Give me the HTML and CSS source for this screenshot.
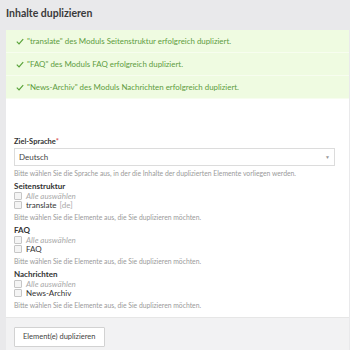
FILE: index.html
```html
<!DOCTYPE html>
<html lang="de">
<head>
    <meta charset="UTF-8">
    <title>Inhalte duplizieren</title>
    <link rel="stylesheet" href="styles.css">
</head>
<body>
    <h1 class="page-title">Inhalte duplizieren</h1>

    <div class="panel">
        <ul class="alerts">
            <li class="alert"><svg class="check" viewBox="0 0 10 8"><path d="M1 4.2 L3.8 7 L9 1" /></svg>"translate" des Moduls Seitenstruktur erfolgreich dupliziert.</li>
            <li class="alert"><svg class="check" viewBox="0 0 10 8"><path d="M1 4.2 L3.8 7 L9 1" /></svg>"FAQ" des Moduls FAQ erfolgreich dupliziert.</li>
            <li class="alert"><svg class="check" viewBox="0 0 10 8"><path d="M1 4.2 L3.8 7 L9 1" /></svg>"News-Archiv" des Moduls Nachrichten erfolgreich dupliziert.</li>
        </ul>

        <form class="panel-body">
            <div class="field">
                <label class="field-label">Ziel-Sprache<span class="req">*</span></label>
                <div class="select">
                    <span>Deutsch</span>
                    <span class="caret">&#9660;</span>
                </div>
                <p class="hint">Bitte wählen Sie die Sprache aus, in der die Inhalte der duplizierten Elemente vorliegen werden.</p>
            </div>

            <div class="field">
                <label class="group-label">Seitenstruktur</label>
                <label class="option all"><span class="box"></span>Alle auswählen</label>
                <label class="option"><span class="box"></span>translate <span class="lang">[de]</span></label>
                <p class="hint">Bitte wählen Sie die Elemente aus, die Sie duplizieren möchten.</p>
            </div>

            <div class="field">
                <label class="group-label">FAQ</label>
                <label class="option all"><span class="box"></span>Alle auswählen</label>
                <label class="option"><span class="box"></span>FAQ</label>
                <p class="hint">Bitte wählen Sie die Elemente aus, die Sie duplizieren möchten.</p>
            </div>

            <div class="field">
                <label class="group-label">Nachrichten</label>
                <label class="option all"><span class="box"></span>Alle auswählen</label>
                <label class="option"><span class="box"></span>News-Archiv</label>
                <p class="hint">Bitte wählen Sie die Elemente aus, die Sie duplizieren möchten.</p>
            </div>
        </form>

        <div class="panel-footer">
            <button class="btn">Element(e) duplizieren</button>
        </div>
    </div>
</body>
</html>
```

FILE: styles.css
```css
body {
    margin: 0;
    font-family: Lato, "Open Sans", sans-serif;
    background-color: #e9e9eb;
    color: #333;
    height: 350px;
    overflow: hidden;
}
.page-title {
    margin: 0;
    height: 30px;
    line-height: 26px;
    padding-left: 6px;
    font-size: 10.5px;
    font-weight: bold;
    color: #3a3a3a;
}
.panel {
    margin-left: 6px;
    margin-right: 1px;
    background-color: #fff;
}
.alerts {
    list-style: none;
    margin: 0;
    padding: 0;
}
.alert {
    height: 22px;
    padding-left: 10px;
    font-size: 7.9px;
    color: #5d9b3e;
    background-color: #effbe1;
    border-bottom: 1px solid #f7fdef;
    display: flex;
    align-items: center;
}
.check {
    width: 8px;
    height: 7px;
    margin-right: 3px;
    fill: none;
    stroke: #5aa33a;
    stroke-width: 1.5;
}
.panel-body {
    padding: 38px 14px 8px 8px;
}
.field {
    margin-bottom: 5px;
}
.field:last-child {
    margin-bottom: 0;
}
.field-label,
.group-label {
    display: block;
    font-weight: bold;
    font-size: 7.5px;
    line-height: 9px;
    color: #333;
}
.group-label {
    font-size: 8px;
}
.req {
    color: #d9534f;
}
.select {
    display: flex;
    justify-content: space-between;
    align-items: center;
    height: 16px;
    margin-top: 2px;
    padding: 0 4px;
    border: 1px solid #dcdcdc;
    font-size: 8px;
    color: #444;
}
.caret {
    font-size: 5px;
    color: #999;
}
.hint {
    margin: 3px 0 0;
    font-size: 6.8px;
    line-height: 8px;
    color: #9a9a9a;
}
.option {
    display: flex;
    align-items: center;
    height: 9.5px;
    font-size: 8px;
    color: #333;
}
.option.all {
    font-style: italic;
    color: #aaa;
}
.lang {
    color: #aaa;
    margin-left: 3px;
}
.box {
    width: 6px;
    height: 6px;
    border: 1px solid #c6c6c6;
    border-radius: 1px;
    background-color: #f4f4f4;
    margin-right: 4px;
}
.panel-footer {
    background-color: #f2f2f3;
    border-top: 1px solid #e6e6e6;
    padding: 5px 8px 4px;
}
.btn {
    font-family: Lato, sans-serif;
    font-size: 7.5px;
    color: #444;
    background-color: #fff;
    border: 1px solid #d2d2d2;
    border-radius: 1px;
    height: 20px;
    padding: 0 8px;
}
```
